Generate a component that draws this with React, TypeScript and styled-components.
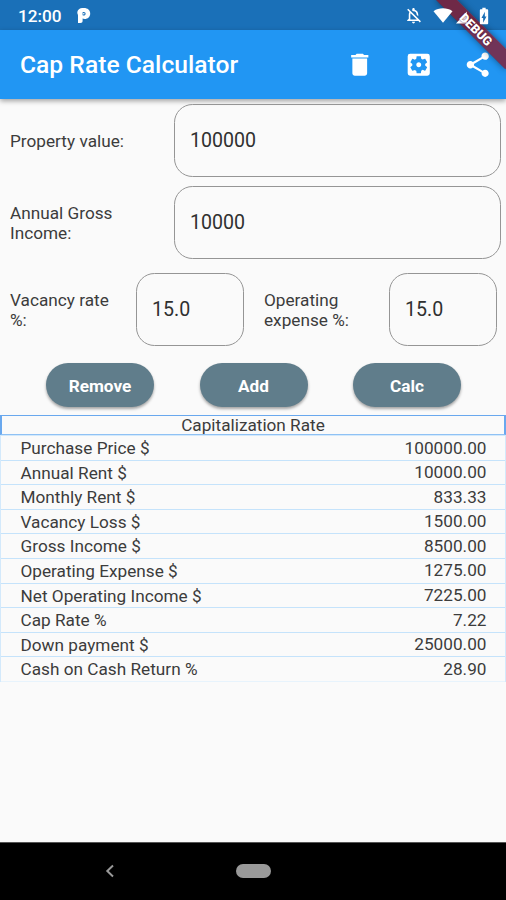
import React from "react";
import styled, { createGlobalStyle } from "styled-components";
import {
  MdBatteryChargingFull,
  MdDelete,
  MdOutlineNotificationsOff,
  MdSettingsApplications,
  MdShare,
} from "react-icons/md";

const GlobalStyle = createGlobalStyle`
  * { box-sizing: border-box; }
  body {
    margin: 0;
    background: #fafafa;
    font-family: Roboto, "Liberation Sans", sans-serif;
    color: #3c3c3c;
  }
`;

const Screen = styled.div`
  position: relative;
  display: flex;
  flex-direction: column;
  width: 506px;
  height: 900px;
  overflow: hidden;
  background: #fafafa;
`;

const StatusBar = styled.header`
  display: flex;
  align-items: center;
  height: 30px;
  padding: 1px 12px 0 18px;
  background: #1a70b8;
  color: #fff;
`;

const Clock = styled.span`
  width: 59px;
  font-size: 17.2px;
  font-weight: 500;
`;

const StatusIcons = styled.div`
  position: relative;
  z-index: 2;
  display: flex;
  align-items: center;
  margin-left: auto;
  svg { display: block; }
`;

const WifiIcon = styled.svg`
  margin: 0 3px 0 10px;
`;

const AppBar = styled.div`
  display: flex;
  align-items: center;
  height: 69px;
  padding: 0 14px 0 20px;
  background: #2196f3;
  color: #fff;
  box-shadow: 0 2px 5px rgba(0, 0, 0, 0.36);
`;

const Title = styled.h1`
  flex: 1;
  margin: 0;
  font-size: 24.6px;
  font-weight: 500;
  letter-spacing: 0.03px;
`;

const Actions = styled.div`
  display: flex;
  gap: 29.5px;
  svg {
    display: block;
    width: 29.5px;
    height: 29.5px;
  }
`;

const Main = styled.main`
  flex: 1;
`;

const FieldRow = styled.div<{ $top: number }>`
  display: flex;
  align-items: center;
  margin-top: ${(p) => p.$top}px;
  padding-left: 10px;
`;

const Label = styled.label<{ $width: number }>`
  width: ${(p) => p.$width}px;
  font-size: 17.2px;
  line-height: 20px;
  letter-spacing: 0.01px;
`;

const Field = styled.input<{ $width: number }>`
  width: ${(p) => p.$width}px;
  height: 73px;
  margin: 0;
  padding: 0 15px 1px;
  border: 1px solid #959595;
  border-radius: 18.5px;
  outline: none;
  background: transparent;
  color: #303030;
  font: 400 19.6px Roboto, "Liberation Sans", sans-serif;
`;

const ButtonRow = styled.div`
  display: flex;
  justify-content: space-between;
  margin-top: 17px;
  padding: 0 45px 0 46px;
`;

const PillButton = styled.button`
  width: 108px;
  height: 44px;
  padding: 1px 0 0;
  border: 0;
  border-radius: 22px;
  background: #607d8b;
  color: #fff;
  font: 700 17.2px Roboto, "Liberation Sans", sans-serif;
  box-shadow: 0 2px 3px rgba(0, 0, 0, 0.35);
`;

const TableHeading = styled.div`
  height: 20px;
  margin-top: 8px;
  border: 1px solid #69a8ee;
  border-width: 1px 2px;
  border-bottom-color: #8fc1f4;
  text-align: center;
  font-size: 17.2px;
  line-height: 19px;
`;

const Table = styled.div`
  border: 1px solid #d3e9fb;
  border-width: 1px 1px 0;
`;

const TableRow = styled.div`
  display: flex;
  justify-content: space-between;
  height: 24.6px;
  padding: 0 18.5px 0 19.5px;
  border-bottom: 1px solid #c5e3fb;
  font-size: 17.2px;
  line-height: 25.400px;
  letter-spacing: 0.01px;
  &:last-child { border-bottom-color: #e7f3fc; }
`;

const Amount = styled.span`
  margin-top: -0.5px;
`;

const NavBar = styled.nav`
  display: grid;
  grid-template-columns: 220px 67px 1fr;
  align-items: center;
  justify-items: center;
  height: 58px;
  padding-bottom: 1px;
  border-top: 1px solid #555;
  background: #000;
`;

const HomePill = styled.div`
  width: 35px;
  height: 14px;
  border-radius: 7px;
  background: #999;
`;

const BannerClip = styled.div`
  position: absolute;
  top: 0;
  right: 0;
  width: 90px;
  height: 90px;
  overflow: hidden;
  pointer-events: none;
`;

const BannerBand = styled.div`
  position: absolute;
  top: 22.2px;
  right: -19.6px;
  width: 98.4px;
  height: 14.8px;
  transform: rotate(45deg);
  background: rgba(144, 14, 28, 0.72);
  box-shadow: 0 0 7px rgba(0, 0, 0, 0.45);
`;

const BannerText = styled(BannerBand)`
  z-index: 3;
  background: none;
  box-shadow: none;
  color: #fff;
  text-align: center;
  font-size: 12.5px;
  font-weight: 900;
  line-height: 15px;
  text-shadow: 0 0 2px rgba(80, 10, 30, 0.9);
`;

const results: [string, string][] = [
  ["Purchase Price $", "100000.00"],
  ["Annual Rent $", "10000.00"],
  ["Monthly Rent $", "833.33"],
  ["Vacancy Loss $", "1500.00"],
  ["Gross Income $", "8500.00"],
  ["Operating Expense $", "1275.00"],
  ["Net Operating Income $", "7225.00"],
  ["Cap Rate %", "7.22"],
  ["Down payment $", "25000.00"],
  ["Cash on Cash Return %", "28.90"],
];

const ParkingMark = () => (
  <svg width="14" height="17" viewBox="0 0 14 17">
    <path
      fill="#fff"
      fillRule="evenodd"
      d="M1 3.2C2.5 1.2 4.5 1 7 1c3.6 0 6.2 2.1 6.2 5.4 0 3.4-2.4 5.5-5.5 5.5-1 0-1.5-.1-2.1-.3V14c0 1.3-.7 2-2.2 2H1V8.5C1 7.2.3 6.9.3 5.8.3 4.7.5 3.9 1 3.2ZM5.6 5.2v3c.4.3.7.3 1.1.3 1.2 0 1.9-.7 1.9-1.8 0-1.1-.7-1.8-1.8-1.8-.5 0-.8.1-1.2.3Z"
    />
    <circle cx="6.8" cy="6.7" r=".8" fill="#fff" />
  </svg>
);

export default function App() {
  return (
    <>
      <GlobalStyle />
      <Screen>
        <StatusBar>
          <Clock>12:00</Clock>
          <ParkingMark />
          <StatusIcons>
            <MdOutlineNotificationsOff size={19} />
            <WifiIcon width="20" height="17" viewBox="0 0 20 17">
              <path fill="#fff" d="M.5 4.2C6 .4 14 .4 19.5 4.2L10 15.8Z" />
            </WifiIcon>
            <svg width="18" height="18" viewBox="0 0 18 18">
              <path fill="#fff" d="M0 16.5 11 4.500v12Z" />
            </svg>
            <MdBatteryChargingFull size={20} />
          </StatusIcons>
        </StatusBar>
        <AppBar>
          <Title>Cap Rate Calculator</Title>
          <Actions>
            <MdDelete />
            <MdSettingsApplications />
            <MdShare />
          </Actions>
        </AppBar>
        <Main>
          <FieldRow $top={5}>
            <Label $width={164}>Property value:</Label>
            <Field $width={327} defaultValue="100000" />
          </FieldRow>
          <FieldRow $top={9}>
            <Label $width={164}>
              Annual Gross
              <br />
              Income:
            </Label>
            <Field $width={327} defaultValue="10000" />
          </FieldRow>
          <FieldRow $top={14}>
            <Label $width={126}>
              Vacancy rate
              <br />
              %:
            </Label>
            <Field $width={108} defaultValue="15.0" />
            <FieldRow $top={0}>
              <Label $width={10} />
              <Label $width={125}>
                Operating
                <br />
                expense %:
              </Label>
              <Field $width={108} defaultValue="15.0" />
            </FieldRow>
          </FieldRow>
          <ButtonRow>
            <PillButton>Remove</PillButton>
            <PillButton>Add</PillButton>
            <PillButton>Calc</PillButton>
          </ButtonRow>
          <TableHeading>Capitalization Rate</TableHeading>
          <Table>
            {results.map(([name, amount]) => (
              <TableRow key={name}>
                <span>{name}</span>
                <Amount>{amount}</Amount>
              </TableRow>
            ))}
          </Table>
        </Main>
        <NavBar>
          <svg width="10" height="14" viewBox="0 0 10 14">
            <path d="M8 1.5 2.3 7 8 12.5" fill="none" stroke="#999" strokeWidth="2" />
          </svg>
          <HomePill />
        </NavBar>
        <BannerClip>
          <BannerBand />
          <BannerText>DEBUG</BannerText>
        </BannerClip>
      </Screen>
    </>
  );
}
